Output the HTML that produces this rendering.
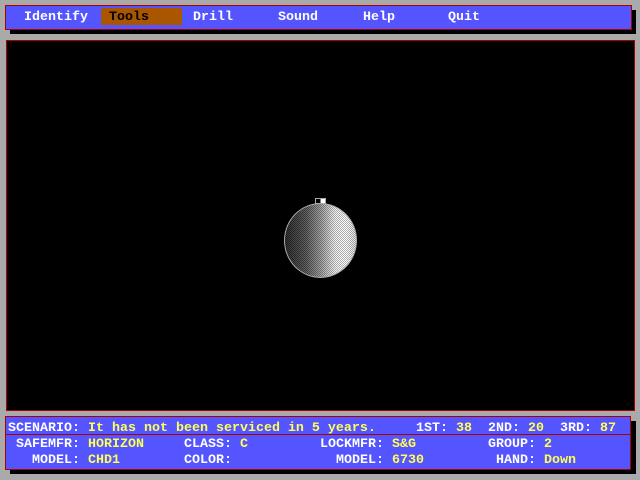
<!DOCTYPE html>
<html><head><meta charset="utf-8"><style>
*{margin:0;padding:0;box-sizing:border-box}
body{width:640px;height:480px;background:#aaaaaa;position:relative;overflow:hidden;font-family:"Liberation Mono",monospace;font-weight:bold;font-size:13.33px}
.a{position:absolute}
.t{position:absolute;white-space:pre;line-height:14px;color:#fff}
.y{color:#ffff55}
</style></head><body>
<div class="a" style="left:10px;top:10px;width:626px;height:24px;background:#000"></div>
<div class="a" style="left:5px;top:5px;width:627px;height:25px;background:#5555ff;border:1px solid #aa0000"></div>
<div class="a" style="left:101px;top:8px;width:81px;height:17px;background:#aa5500"></div>
<div class="t" style="left:24px;top:11px">Identify</div>
<div class="t" style="left:109px;top:11px;color:#000">Tools</div>
<div class="t" style="left:193px;top:11px">Drill</div>
<div class="t" style="left:278px;top:11px">Sound</div>
<div class="t" style="left:363px;top:11px">Help</div>
<div class="t" style="left:448px;top:11px">Quit</div>

<div class="a" style="left:6px;top:40px;width:629px;height:371px;background:#000;border:1px solid #aa0000"></div>
<div class="a" style="left:315px;top:198px;width:11px;height:6px;border:1px solid #aaa;background:linear-gradient(90deg,#000 50%,#fff 50%)"></div>
<div class="a" style="left:284px;top:203px;width:73px;height:75px;border-radius:50%;border:1px solid #aaa;background:linear-gradient(90deg,#222 0%,#555 30%,#999 50%,#eee 70%,#fff 85%,#ddd 100%)"></div>
<div class="a" style="left:285px;top:204px;width:71px;height:73px;border-radius:50%;background:repeating-conic-gradient(rgba(0,0,0,.3) 0 25%,rgba(255,255,255,.08) 0 50%) 0 0/2px 2px"></div>

<div class="a" style="left:10px;top:421px;width:626px;height:53px;background:#000"></div>
<div class="a" style="left:5px;top:416px;width:626px;height:54px;background:#5555ff;border:1px solid #aa0000"></div>
<div class="a" style="left:5px;top:434px;width:626px;height:1px;background:#aa0000"></div>
<div class="t" style="left:8px;top:422px">SCENARIO: <span class="y">It has not been serviced in 5 years.</span></div>
<div class="t" style="left:416px;top:422px">1ST: <span class="y">38</span>  2ND: <span class="y">20</span>  3RD: <span class="y">87</span></div>
<div class="t" style="left:16px;top:438px">SAFEMFR: <span class="y">HORIZON</span></div>
<div class="t" style="left:184px;top:438px">CLASS: <span class="y">C</span></div>
<div class="t" style="left:320px;top:438px">LOCKMFR: <span class="y">S&amp;G</span></div>
<div class="t" style="left:488px;top:438px">GROUP: <span class="y">2</span></div>
<div class="t" style="left:32px;top:454px">MODEL: <span class="y">CHD1</span></div>
<div class="t" style="left:184px;top:454px">COLOR:</div>
<div class="t" style="left:336px;top:454px">MODEL: <span class="y">6730</span></div>
<div class="t" style="left:496px;top:454px">HAND: <span class="y">Down</span></div>
</body></html>
